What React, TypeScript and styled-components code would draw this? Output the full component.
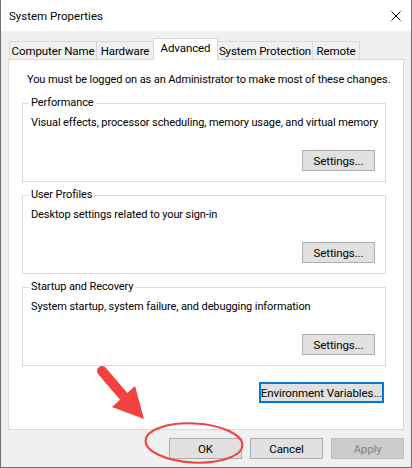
import React from "react";
import styled, { createGlobalStyle } from "styled-components";

const Global = createGlobalStyle`
  html, body { margin: 0; padding: 0; background: #f0f0f0; overflow: hidden; }
  body { font-family: Roboto, "Liberation Sans", Arial, sans-serif; font-size: 11px; letter-spacing: -0.1px; color: #000; }
  * { box-sizing: border-box; }
`;

const Window = styled.div`
  position: relative;
  width: 412px;
  height: 468px;
  background: #f0f0f0;
  border: 1px solid #6f6f6f;
  border-top: none;
  display: flex;
  flex-direction: column;
`;

const TitleBar = styled.div`
  height: 31px;
  flex: none;
  background: #fff;
  display: flex;
  align-items: center;
  justify-content: space-between;
  padding: 0 9px 0 8px;
`;

const Title = styled.span`
  font-size: 11.5px;
  letter-spacing: 0;
  line-height: 16px;
  color: #000;
`;

const CloseBox = styled.div`
  width: 30px;
  height: 30px;
  display: flex;
  align-items: center;
  justify-content: flex-end;
  padding-right: 1px;
`;

const Body = styled.div`
  flex: 1;
  display: flex;
  flex-direction: column;
  padding: 7px 7px 8px 7px;
`;

const TabStrip = styled.div`
  height: 21px;
  display: flex;
  align-items: flex-end;
  padding-left: 1px;
`;

const Tab = styled.div<{ $w: number; $active?: boolean }>`
  width: ${(p) => p.$w + 1}px;
  height: ${(p) => (p.$active ? 22 : 18)}px;
  margin-bottom: ${(p) => (p.$active ? -1 : 0)}px;
  margin-right: -1px;
  position: relative;
  z-index: ${(p) => (p.$active ? 2 : 1)};
  background: ${(p) => (p.$active ? "#fff" : "#f0f0f0")};
  border: 1px solid #d9d9d9;
  border-bottom: none;
  display: flex;
  align-items: center;
  justify-content: center;
  padding-bottom: ${(p) => (p.$active ? 3 : 0)}px;
  font-size: 11.5px;
  line-height: 16px;
  white-space: nowrap;
`;

const Panel = styled.div`
  height: 371px;
  background: #fff;
  border: 1px solid #d9d9d9;
  padding: 12px 17px 0 13px;
  display: flex;
  flex-direction: column;
`;

const Intro = styled.div`
  line-height: 16px;
  margin-left: 5px;
  white-space: nowrap;
`;

const Group = styled.fieldset<{ $first?: boolean }>`
  margin: ${(p) => (p.$first ? 7 : 5)}px 0 0 0;
  min-width: 0;
  border: 1px solid #dcdcdc;
  padding: 4px 10px 10px 8px;
  display: flex;
  flex-direction: column;
`;

const Legend = styled.legend`
  padding: 0 2px;
  margin-left: -2px;
  line-height: 16px;
`;

const Desc = styled.div`
  line-height: 16px;
  white-space: nowrap;
`;

const ButtonRow = styled.div<{ $top: number; $right?: number }>`
  display: flex;
  justify-content: flex-end;
  gap: 8px;
  margin-top: ${(p) => p.$top}px;
  margin-right: ${(p) => p.$right ?? 0}px;
`;

const Button = styled.button<{ $w?: number; $focused?: boolean }>`
  width: ${(p) => p.$w ?? 73}px;
  height: 21px;
  padding: 0;
  font-family: inherit;
  font-size: 11.5px;
  letter-spacing: -0.1px;
  white-space: nowrap;
  color: #000;
  background: #e1e1e1;
  border: ${(p) => (p.$focused ? "2px solid #0078d7" : "1px solid #adadad")};
  display: flex;
  align-items: center;
  justify-content: center;
  &:disabled {
    background: #cccccc;
    border-color: #bfbfbf;
    color: #838383;
  }
`;

const Annotation = styled.svg`
  position: absolute;
  left: 0;
  top: 0;
  pointer-events: none;
  z-index: 10;
`;

const tabs = [
  { label: "Computer Name", w: 87 },
  { label: "Hardware", w: 57 },
  { label: "Advanced", w: 64, active: true },
  { label: "System Protection", w: 95 },
  { label: "Remote", w: 47 },
];

const groups = [
  { title: "Performance", desc: "Visual effects, processor scheduling, memory usage, and virtual memory" },
  { title: "User Profiles", desc: "Desktop settings related to your sign-in" },
  { title: "Startup and Recovery", desc: "System startup, system failure, and debugging information" },
];

export default function App() {
  return (
    <>
      <Global />
      <Window>
        <TitleBar>
          <Title>System Properties</Title>
          <CloseBox>
            <svg width="10" height="10" viewBox="0 0 10 10">
              <path d="M0.5 0.5 L9.5 9.5 M9.5 0.5 L0.5 9.5" stroke="#000" strokeWidth="1" fill="none" />
            </svg>
          </CloseBox>
        </TitleBar>
        <Body>
          <TabStrip>
            {tabs.map((t) => (
              <Tab key={t.label} $w={t.w} $active={t.active}>
                {t.label}
              </Tab>
            ))}
          </TabStrip>
          <Panel>
            <Intro>You must be logged on as an Administrator to make most of these changes.</Intro>
            {groups.map((g, i) => (
              <Group key={g.title} $first={i === 0}>
                <Legend>{g.title}</Legend>
                <Desc>{g.desc}</Desc>
                <ButtonRow $top={19}>
                  <Button>Settings...</Button>
                </ButtonRow>
              </Group>
            ))}
            <ButtonRow $top={16} $right={2}>
              <Button $w={125} $focused>
                Environment Variables...
              </Button>
            </ButtonRow>
          </Panel>
          <ButtonRow $top={8}>
            <Button>OK</Button>
            <Button>Cancel</Button>
            <Button disabled>Apply</Button>
          </ButtonRow>
        </Body>
        <Annotation width="412" height="468" viewBox="0 0 412 468">
          <line x1="101" y1="371" x2="125" y2="399" stroke="#f24141" strokeWidth="10" strokeLinecap="round" />
          <polygon points="111,407 134,386 143,419" fill="#f24141" />
          <ellipse cx="193" cy="443" rx="48.5" ry="19.5" fill="none" stroke="#ee4444" strokeWidth="2" transform="rotate(3 193 443)" />
        </Annotation>
      </Window>
    </>
  );
}
